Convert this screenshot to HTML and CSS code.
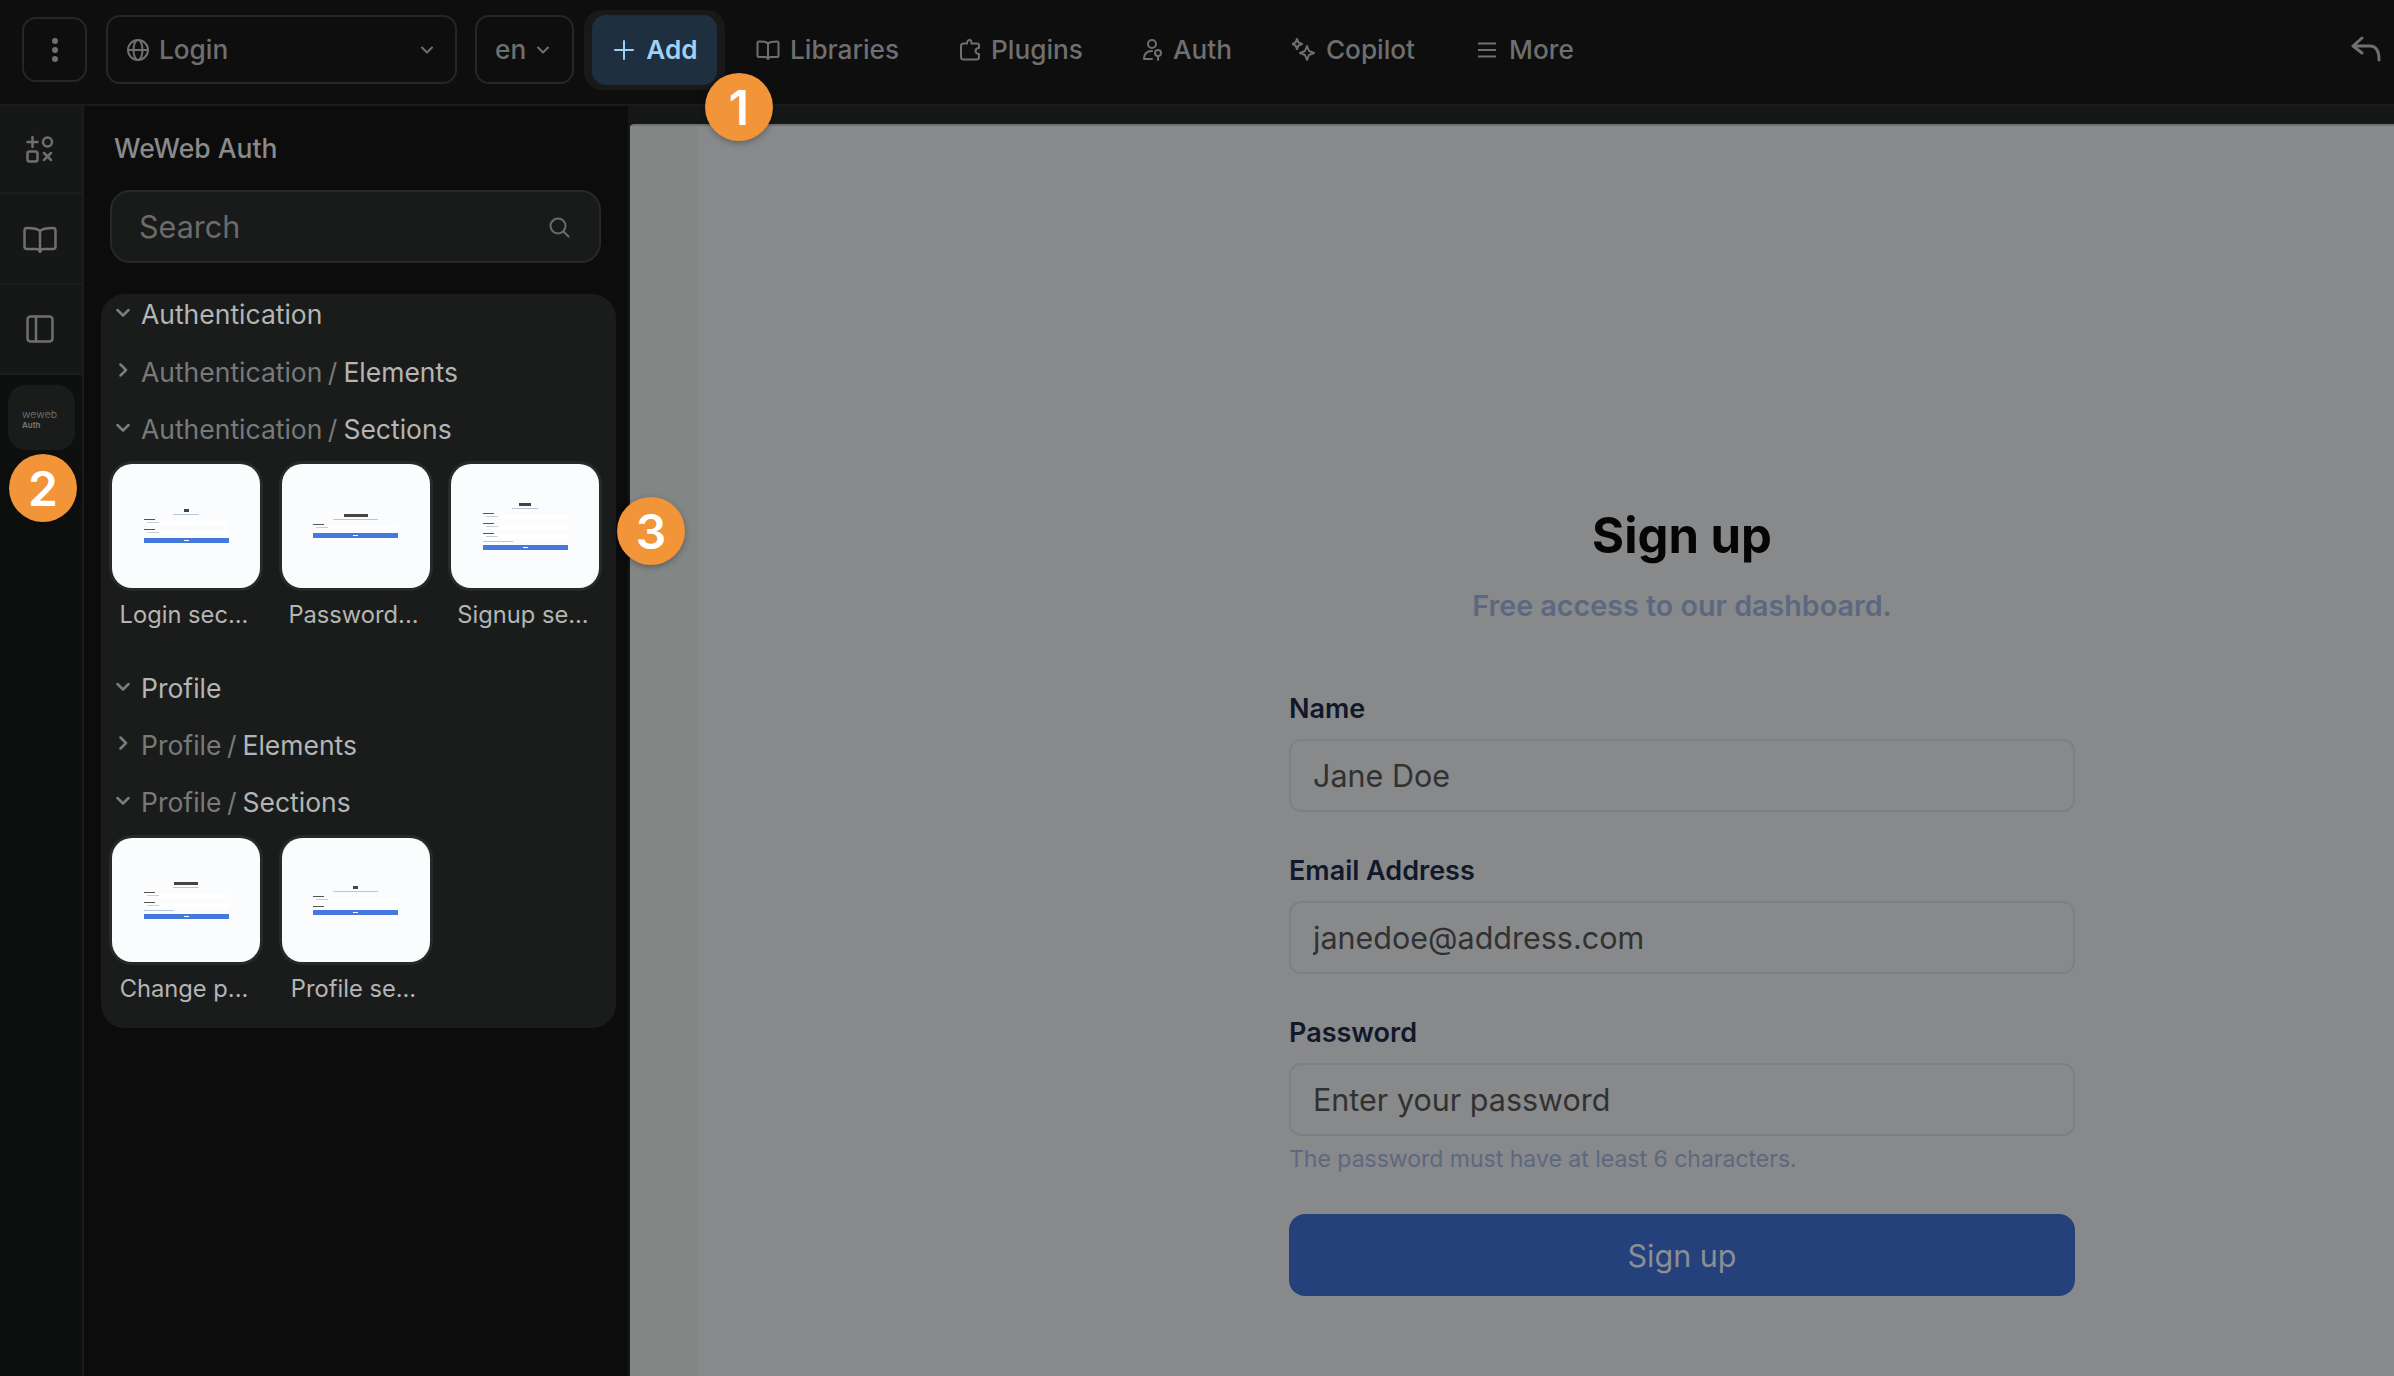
FILE: index.html
```html
<!DOCTYPE html>
<html lang="en">
<head>
    <meta charset="UTF-8">
    <meta name="viewport" content="width=device-width, initial-scale=1.0">
    <title>WeWeb Auth</title>
    <link rel="stylesheet" href="styles.css">
</head>
<body>
    <header class="topbar">
        <button class="tool-btn menu-btn" aria-label="Menu">
            <svg width="24" height="32" viewBox="0 0 24 32"><circle cx="12" cy="7" r="3"/><circle cx="12" cy="16" r="3"/><circle cx="12" cy="25" r="3"/></svg>
        </button>
        <div class="tool-btn page-select">
            <svg class="ico" width="24" height="24" viewBox="0 0 24 24"><circle cx="12" cy="12" r="10"/><ellipse cx="12" cy="12" rx="4.5" ry="10"/><path d="M2 12h20"/></svg>
            <span class="page-name">Login</span>
            <svg class="ico chev" width="14" height="14" viewBox="0 0 14 14"><path d="M2 4.5l5 5 5-5"/></svg>
        </div>
        <div class="tool-btn lang-select">
            <span>en</span>
            <svg class="ico chev" width="14" height="14" viewBox="0 0 14 14"><path d="M2 4.5l5 5 5-5"/></svg>
        </div>
        <div class="add-halo">
            <button class="add-btn">
                <svg class="ico" width="20" height="20" viewBox="0 0 20 20"><path d="M10 1v18M1 10h18"/></svg>
                Add
            </button>
        </div>
        <nav class="nav">
            <a class="nav-item">
                <svg class="ico" width="24" height="24" viewBox="0 0 24 24"><path d="M12 5.5C10.5 4 8 3.500 3 3.500c-1 0-1.500.5-1.500 1.500v12.500c0 1 .5 1.500 1.500 1.500h6c1.500 0 2.500.5 3 2 .5-1.500 1.500-2 3-2h6c1 0 1.500-.5 1.500-1.500V5c0-1-.5-1.500-1.500-1.500-5 0-7.500.5-9 2zM12 5.500V21"/></svg>
                Libraries
            </a>
            <a class="nav-item">
                <svg class="ico" width="22" height="24" viewBox="0 0 22 24"><path d="M2 8c0-1.500 1-2.500 2.500-2.500H8C8 3 9.500 1.500 11 2c1.500.5 1.500 2 1.500 3.500H18c1 0 2 .5 2 1.500v3c-2.500 0-3.500 1.500-3.500 3s1.500 3 3.500 3v3c0 1.500-1 2.500-2.500 2.500h-13C3 21.500 2 20.500 2 19z"/></svg>
                Plugins
            </a>
            <a class="nav-item">
                <svg class="ico" width="20" height="24" viewBox="0 0 20 24"><circle cx="9" cy="6" r="4"/><path d="M1 21c0-5 3-8 8-8M1 21h8"/><circle cx="15" cy="15" r="3"/><path d="M15 18v4"/></svg>
                Auth
            </a>
            <a class="nav-item nav-copilot">
                <svg class="ico" width="24" height="24" viewBox="0 0 24 24"><path d="M5 1l1.500 3.500L10 6 6.500 7.500 5 11 3.500 7.500 0 6l3.500-1.500zM15 8l2 5 5 2-5 2-2 5-2-5-5-2 5-2z"/></svg>
                Copilot
            </a>
            <a class="nav-item nav-more">
                <svg class="ico" width="18" height="18" viewBox="0 0 18 18"><path d="M0 2.500h18M0 9h18M0 15.500h18"/></svg>
                More
            </a>
        </nav>
        <svg class="ico undo" width="32" height="28" viewBox="0 0 32 28"><path d="M11 2L2 10l9 7M2 10h17c6 0 9 4 9 14"/></svg>
    </header>

    <div class="workspace">
        <aside class="rail">
            <div class="rail-cell">
                <svg class="ico" width="28" height="28" viewBox="0 0 28 28"><path d="M1.500 7h10M6.500 2v10"/><circle cx="21.500" cy="7" r="4.500"/><rect x="1.500" y="16.500" width="10" height="10" rx="2"/><path d="M18 18l7 7M25 18l-7 7"/></svg>
            </div>
            <div class="rail-cell">
                <svg class="ico" width="34" height="28" viewBox="0 0 34 28"><path d="M17 5C15 3 12 2 4 2 2.500 2 1.500 3 1.500 4.500v16c0 1.500 1 2.500 2.500 2.500h9c2 0 3.500 1 4 3 .5-2 2-3 4-3h9c1.500 0 2.500-1 2.500-2.500v-16C32.500 3 31.500 2 30 2c-8 0-11 1-13 3zM17 5v20"/></svg>
            </div>
            <div class="rail-cell">
                <svg class="ico" width="28" height="28" viewBox="0 0 28 28"><rect x="1.500" y="1.500" width="25" height="25" rx="3"/><path d="M10 1.500v25"/></svg>
            </div>
            <div class="rail-logo">
                <div class="logo-tile"><span class="logo-name">weweb</span><span class="logo-sub">Auth</span></div>
            </div>
        </aside>

        <section class="panel">
            <h2 class="panel-title">WeWeb Auth</h2>
            <div class="search">
                <span>Search</span>
                <svg class="ico" width="22" height="22" viewBox="0 0 22 22"><circle cx="10" cy="10" r="7.500"/><path d="M15.500 15.500l5 5"/></svg>
            </div>
            <div class="groups">
                <div class="row">
                    <svg class="ico arrow" width="14" height="14" viewBox="0 0 14 14"><path d="M1.500 4l5.500 5.500L12.500 4"/></svg>
                    <span class="row-main">Authentication</span>
                </div>
                <div class="row">
                    <svg class="ico arrow" width="14" height="14" viewBox="0 0 14 14"><path d="M4.500 1.500L10 7l-5.500 5.500"/></svg>
                    <span class="row-muted">Authentication /</span><span class="row-main">Elements</span>
                </div>
                <div class="row">
                    <svg class="ico arrow" width="14" height="14" viewBox="0 0 14 14"><path d="M1.500 4l5.500 5.500L12.500 4"/></svg>
                    <span class="row-muted">Authentication /</span><span class="row-main">Sections</span>
                </div>
                <div class="thumbs">
                    <figure class="thumb">
                        <div class="thumb-img">
                            <div class="mini">
                                <i class="mini-title mini-title-s"></i><i class="mini-sub"></i>
                                <i class="mini-label"></i><i class="mini-input"></i>
                                <i class="mini-label"></i><i class="mini-input"></i>
                                <i class="mini-btn"></i>
                            </div>
                        </div>
                        <figcaption>Login sec...</figcaption>
                    </figure>
                    <figure class="thumb">
                        <div class="thumb-img">
                            <div class="mini">
                                <i class="mini-title mini-title-l"></i><i class="mini-sub mini-sub-l"></i>
                                <i class="mini-label"></i><i class="mini-input"></i>
                                <i class="mini-btn"></i>
                            </div>
                        </div>
                        <figcaption>Password...</figcaption>
                    </figure>
                    <figure class="thumb">
                        <div class="thumb-img">
                            <div class="mini">
                                <i class="mini-title"></i><i class="mini-sub"></i>
                                <i class="mini-label"></i><i class="mini-input"></i>
                                <i class="mini-label"></i><i class="mini-input"></i>
                                <i class="mini-label"></i><i class="mini-input"></i>
                                <i class="mini-hint"></i>
                                <i class="mini-btn"></i>
                            </div>
                        </div>
                        <figcaption>Signup se...</figcaption>
                    </figure>
                </div>
                <div class="row row-section">
                    <svg class="ico arrow" width="14" height="14" viewBox="0 0 14 14"><path d="M1.500 4l5.500 5.500L12.500 4"/></svg>
                    <span class="row-main">Profile</span>
                </div>
                <div class="row">
                    <svg class="ico arrow" width="14" height="14" viewBox="0 0 14 14"><path d="M4.500 1.500L10 7l-5.500 5.500"/></svg>
                    <span class="row-muted">Profile /</span><span class="row-main">Elements</span>
                </div>
                <div class="row">
                    <svg class="ico arrow" width="14" height="14" viewBox="0 0 14 14"><path d="M1.500 4l5.500 5.500L12.500 4"/></svg>
                    <span class="row-muted">Profile /</span><span class="row-main">Sections</span>
                </div>
                <div class="thumbs">
                    <figure class="thumb">
                        <div class="thumb-img">
                            <div class="mini">
                                <i class="mini-title mini-title-l"></i><i class="mini-sub"></i>
                                <i class="mini-label"></i><i class="mini-input"></i>
                                <i class="mini-label"></i><i class="mini-input"></i>
                                <i class="mini-hint"></i>
                                <i class="mini-btn"></i>
                            </div>
                        </div>
                        <figcaption>Change p...</figcaption>
                    </figure>
                    <figure class="thumb">
                        <div class="thumb-img">
                            <div class="mini">
                                <i class="mini-title mini-title-s"></i><i class="mini-sub mini-sub-l"></i>
                                <i class="mini-label"></i><i class="mini-input"></i>
                                <i class="mini-label"></i>
                                <i class="mini-btn"></i>
                            </div>
                        </div>
                        <figcaption>Profile se...</figcaption>
                    </figure>
                </div>
            </div>
        </section>

        <main class="stage">
            <div class="canvas">
                <div class="canvas-strip"></div>
                <form class="signup">
                    <h1>Sign up</h1>
                    <p class="signup-sub">Free access to our dashboard.</p>
                    <label class="field-label" for="name">Name</label>
                    <input class="field" id="name" type="text" placeholder="Jane Doe">
                    <label class="field-label" for="email">Email Address</label>
                    <input class="field" id="email" type="text" placeholder="janedoe@address.com">
                    <label class="field-label" for="password">Password</label>
                    <input class="field" id="password" type="text" placeholder="Enter your password">
                    <p class="hint">The password must have at least 6 characters.</p>
                    <button class="submit" type="button">Sign up</button>
                </form>
            </div>
        </main>
    </div>

    <span class="badge badge-1">1</span>
    <span class="badge badge-2">2</span>
    <span class="badge badge-3">3</span>
</body>
</html>
```

FILE: styles.css
```css
* {
    box-sizing: border-box;
}
body {
    margin: 0;
    width: 2394px;
    height: 1376px;
    overflow: hidden;
    position: relative;
    background: #0e0e0e;
    font-family: 'Inter', 'Liberation Sans', sans-serif;
    color: #6f6f6f;
    display: flex;
    flex-direction: column;
}
.ico {
    fill: none;
    stroke: currentColor;
    stroke-width: 2;
    stroke-linecap: round;
    stroke-linejoin: round;
    flex: none;
}

/* top bar */
.topbar {
    height: 104px;
    flex: none;
    display: flex;
    align-items: center;
    padding: 0 0 5px 22px;
    background: #0e0e0e;
    font-size: 26.2px;
    font-weight: 500;
}
.tool-btn {
    display: flex;
    align-items: center;
    height: 69px;
    background: #0e0e0e;
    color: #6f6f6f;
    border: 2px solid #252726;
    border-radius: 14px;
    font: inherit;
}
.menu-btn {
    width: 65px;
    height: 65px;
    justify-content: center;
    padding: 0;
    margin-right: 19px;
}
.menu-btn svg {
    fill: #6f6f6f;
}
.page-select {
    width: 351px;
    padding: 0 21px 0 18px;
    gap: 9px;
    margin-right: 18px;
}
.page-name {
    flex: 1;
}
.lang-select {
    width: 99px;
    padding: 0 18px;
    gap: 10px;
    margin-right: 10px;
}
.add-halo {
    padding: 5px 8px;
    background: #171a19;
    border-radius: 18px;
    margin-right: 31px;
}
.add-btn {
    display: flex;
    align-items: center;
    justify-content: center;
    gap: 12px;
    width: 125px;
    height: 70px;
    padding: 0 0 0 3px;
    border: none;
    border-radius: 14px;
    background: #1e2f40;
    color: #9fd0f5;
    font: inherit;
    font-weight: 600;
}
.nav {
    display: flex;
    align-items: center;
    flex: 1;
}
.nav-item {
    display: flex;
    align-items: center;
    gap: 10px;
    margin-right: 60px;
    white-space: nowrap;
}
.nav-copilot {
    margin-right: 63px;
}
.nav-more {
    gap: 13px;
}
.undo {
    margin-right: 11px;
    stroke-width: 3;
}

/* main area */
.workspace {
    flex: 1;
    display: flex;
    min-height: 0;
    background: #151817;
    border-top: 2px solid #1a1c1b;
}
.rail {
    width: 84px;
    flex: none;
    border-right: 2px solid #1a1c1b;
    background: #0e0f0f;
}
.rail-cell {
    height: 91px;
    display: flex;
    align-items: center;
    justify-content: center;
    padding-right: 3px;
    background: #151817;
    border-bottom: 2px solid #1b1e1d;
}
.rail-cell .ico {
    stroke-width: 2.5;
}
.rail-cell:first-child {
    height: 88px;
}
.rail-cell:nth-child(2) {
    padding-top: 3px;
}
.rail-cell:nth-child(3) {
    height: 90px;
}
.rail-logo {
    padding: 10px 8px;
}
.logo-tile {
    width: 67px;
    height: 65px;
    border-radius: 18px;
    background: #1a1c1b;
    display: flex;
    flex-direction: column;
    justify-content: center;
    padding: 4px 0 0 14px;
}
.logo-name {
    font-size: 10.5px;
    font-weight: 300;
    line-height: 11px;
    color: #7a7a7a;
}
.logo-sub {
    font-size: 8px;
    font-weight: 600;
    line-height: 10px;
    color: #7a7a7a;
}
.panel {
    width: 544px;
    flex: none;
    background: #0c0c0c;
    padding: 0 12px 0 17px;
}
.panel-title {
    margin: 24px 0 0 13px;
    height: 36px;
    font-size: 26.5px;
    line-height: 36px;
    font-weight: 500;
    color: #8a8a8a;
}
.search {
    margin: 24px 15px 0 9px;
    height: 73px;
    display: flex;
    align-items: center;
    justify-content: space-between;
    padding: 0 29px 0 27px;
    background: #181b1a;
    border: 2px solid #262928;
    border-radius: 20px;
    font-size: 30.5px;
    color: #6b6b6b;
}
.groups {
    margin-top: 31px;
    height: 734px;
    padding: 0 10px 0 11px;
    background: #1a1c1b;
    border-radius: 24px;
}
.row {
    height: 40px;
    display: flex;
    align-items: center;
    font-size: 26.5px;
    margin-top: 17.5px;
}
.row:first-child {
    margin-top: 0;
}
.row-section {
    margin-top: 37px;
}
.row-section + .row {
    margin-top: 16.5px;
}
.arrow {
    color: #7a7d7c;
    margin: -3px 11px 0 4px;
    stroke-width: 2.5;
}
.row-main {
    color: #b4b5b4;
}
.row-muted {
    color: #787a7a;
    margin-right: 6px;
    word-spacing: -2px;
}
.thumbs {
    display: flex;
    gap: 21.5px;
    margin-top: 15px;
}
.row-section ~ .thumbs {
    margin-top: 16px;
}
.thumb {
    margin: 0;
    width: 148px;
}
.thumb-img {
    height: 124px;
    background: #fbfcfe;
    border-radius: 20px;
    box-shadow: 0 0 0 3px #282a29;
    display: flex;
    align-items: center;
    justify-content: center;
}
.thumb figcaption {
    margin-top: 11px;
    padding-right: 4px;
    text-align: center;
    font-size: 23.7px;
    line-height: 32px;
    color: #b4b5b4;
    white-space: nowrap;
}

/* tiny form inside the previews */
.mini {
    width: 85px;
    display: flex;
    flex-direction: column;
    align-items: flex-start;
}
.mini i {
    display: block;
}
.mini-title {
    width: 12px;
    height: 3px;
    align-self: center;
    background: #444;
}
.mini-title-s {
    width: 5px;
}
.mini-title-l {
    width: 24px;
}
.mini-sub {
    width: 26px;
    height: 1px;
    margin-top: 2px;
    align-self: center;
    background: #bcc6da;
}
.mini-sub-l {
    width: 45px;
}
.mini-label {
    width: 11px;
    height: 1px;
    margin-top: 4px;
    background: #555;
}
.mini-input {
    width: 100%;
    height: 4px;
    margin-top: 1px;
    background: #fff;
}
.mini-input::before {
    content: "";
    display: block;
    width: 12px;
    height: 1px;
    margin: 1px 0 0 3px;
    background: #c6ccd8;
}
.mini-hint {
    width: 30px;
    height: 1px;
    margin-top: 2px;
    background: #bcc6da;
}
.mini-btn {
    width: 100%;
    height: 5px;
    margin-top: 3px;
    background: #4579e0;
    display: flex !important;
    align-items: center;
    justify-content: center;
}
.mini-btn::after {
    content: "";
    width: 5px;
    height: 1px;
    background: #fff;
}

/* canvas */
.stage {
    flex: 1;
    min-width: 0;
    padding: 18px 0 0 2px;
}
.canvas {
    height: 100%;
    background: #88898b;
    border-top: 2px solid #70726f;
    border-top-left-radius: 4px;
    display: flex;
}
.canvas-strip {
    width: 68px;
    flex: none;
    background: #828685;
    margin-right: 591px;
}
.signup {
    width: 786px;
    flex: none;
    display: flex;
    flex-direction: column;
    padding-top: 380px;
}
.signup h1 {
    margin: 0;
    text-align: center;
    font-size: 49px;
    line-height: 60px;
    font-weight: 700;
    color: #050505;
}
.signup-sub {
    margin: 20px 0 0;
    text-align: center;
    font-size: 28.7px;
    line-height: 40px;
    font-weight: 600;
    color: #5c6880;
}
.field-label {
    display: block;
    font-size: 27px;
    line-height: 36px;
    font-weight: 600;
    color: #10182a;
    margin-bottom: 12px;
}
.signup-sub + .field-label {
    margin-top: 65px;
}
.field {
    display: block;
    width: 100%;
    height: 73px;
    padding: 0 22px;
    background: transparent;
    border: 2px solid #7e7f85;
    border-radius: 12px;
    font: inherit;
    font-size: 30.5px;
    color: #313131;
    outline: none;
}
.field::placeholder {
    color: #313131;
    opacity: 1;
}
.field + .field-label {
    margin-top: 41px;
}
.hint {
    margin: 7px 0 0;
    font-size: 23px;
    line-height: 32px;
    color: #5c6880;
}
.submit {
    margin-top: 39px;
    height: 82px;
    border: none;
    border-radius: 16px;
    background: #24417b;
    color: #8a8e97;
    font: inherit;
    font-size: 30.5px;
}

/* tutorial markers sit over the interface */
.badge {
    position: absolute;
    width: 68px;
    height: 68px;
    border-radius: 50%;
    background: #f29438;
    color: #fff;
    font-size: 48px;
    font-weight: 600;
    display: flex;
    align-items: center;
    justify-content: center;
    box-shadow: 0 2px 6px rgba(0, 0, 0, 0.3);
}
.badge-1 {
    left: 705px;
    top: 73px;
}
.badge-2 {
    left: 9px;
    top: 454px;
}
.badge-3 {
    left: 617px;
    top: 497px;
}
```
